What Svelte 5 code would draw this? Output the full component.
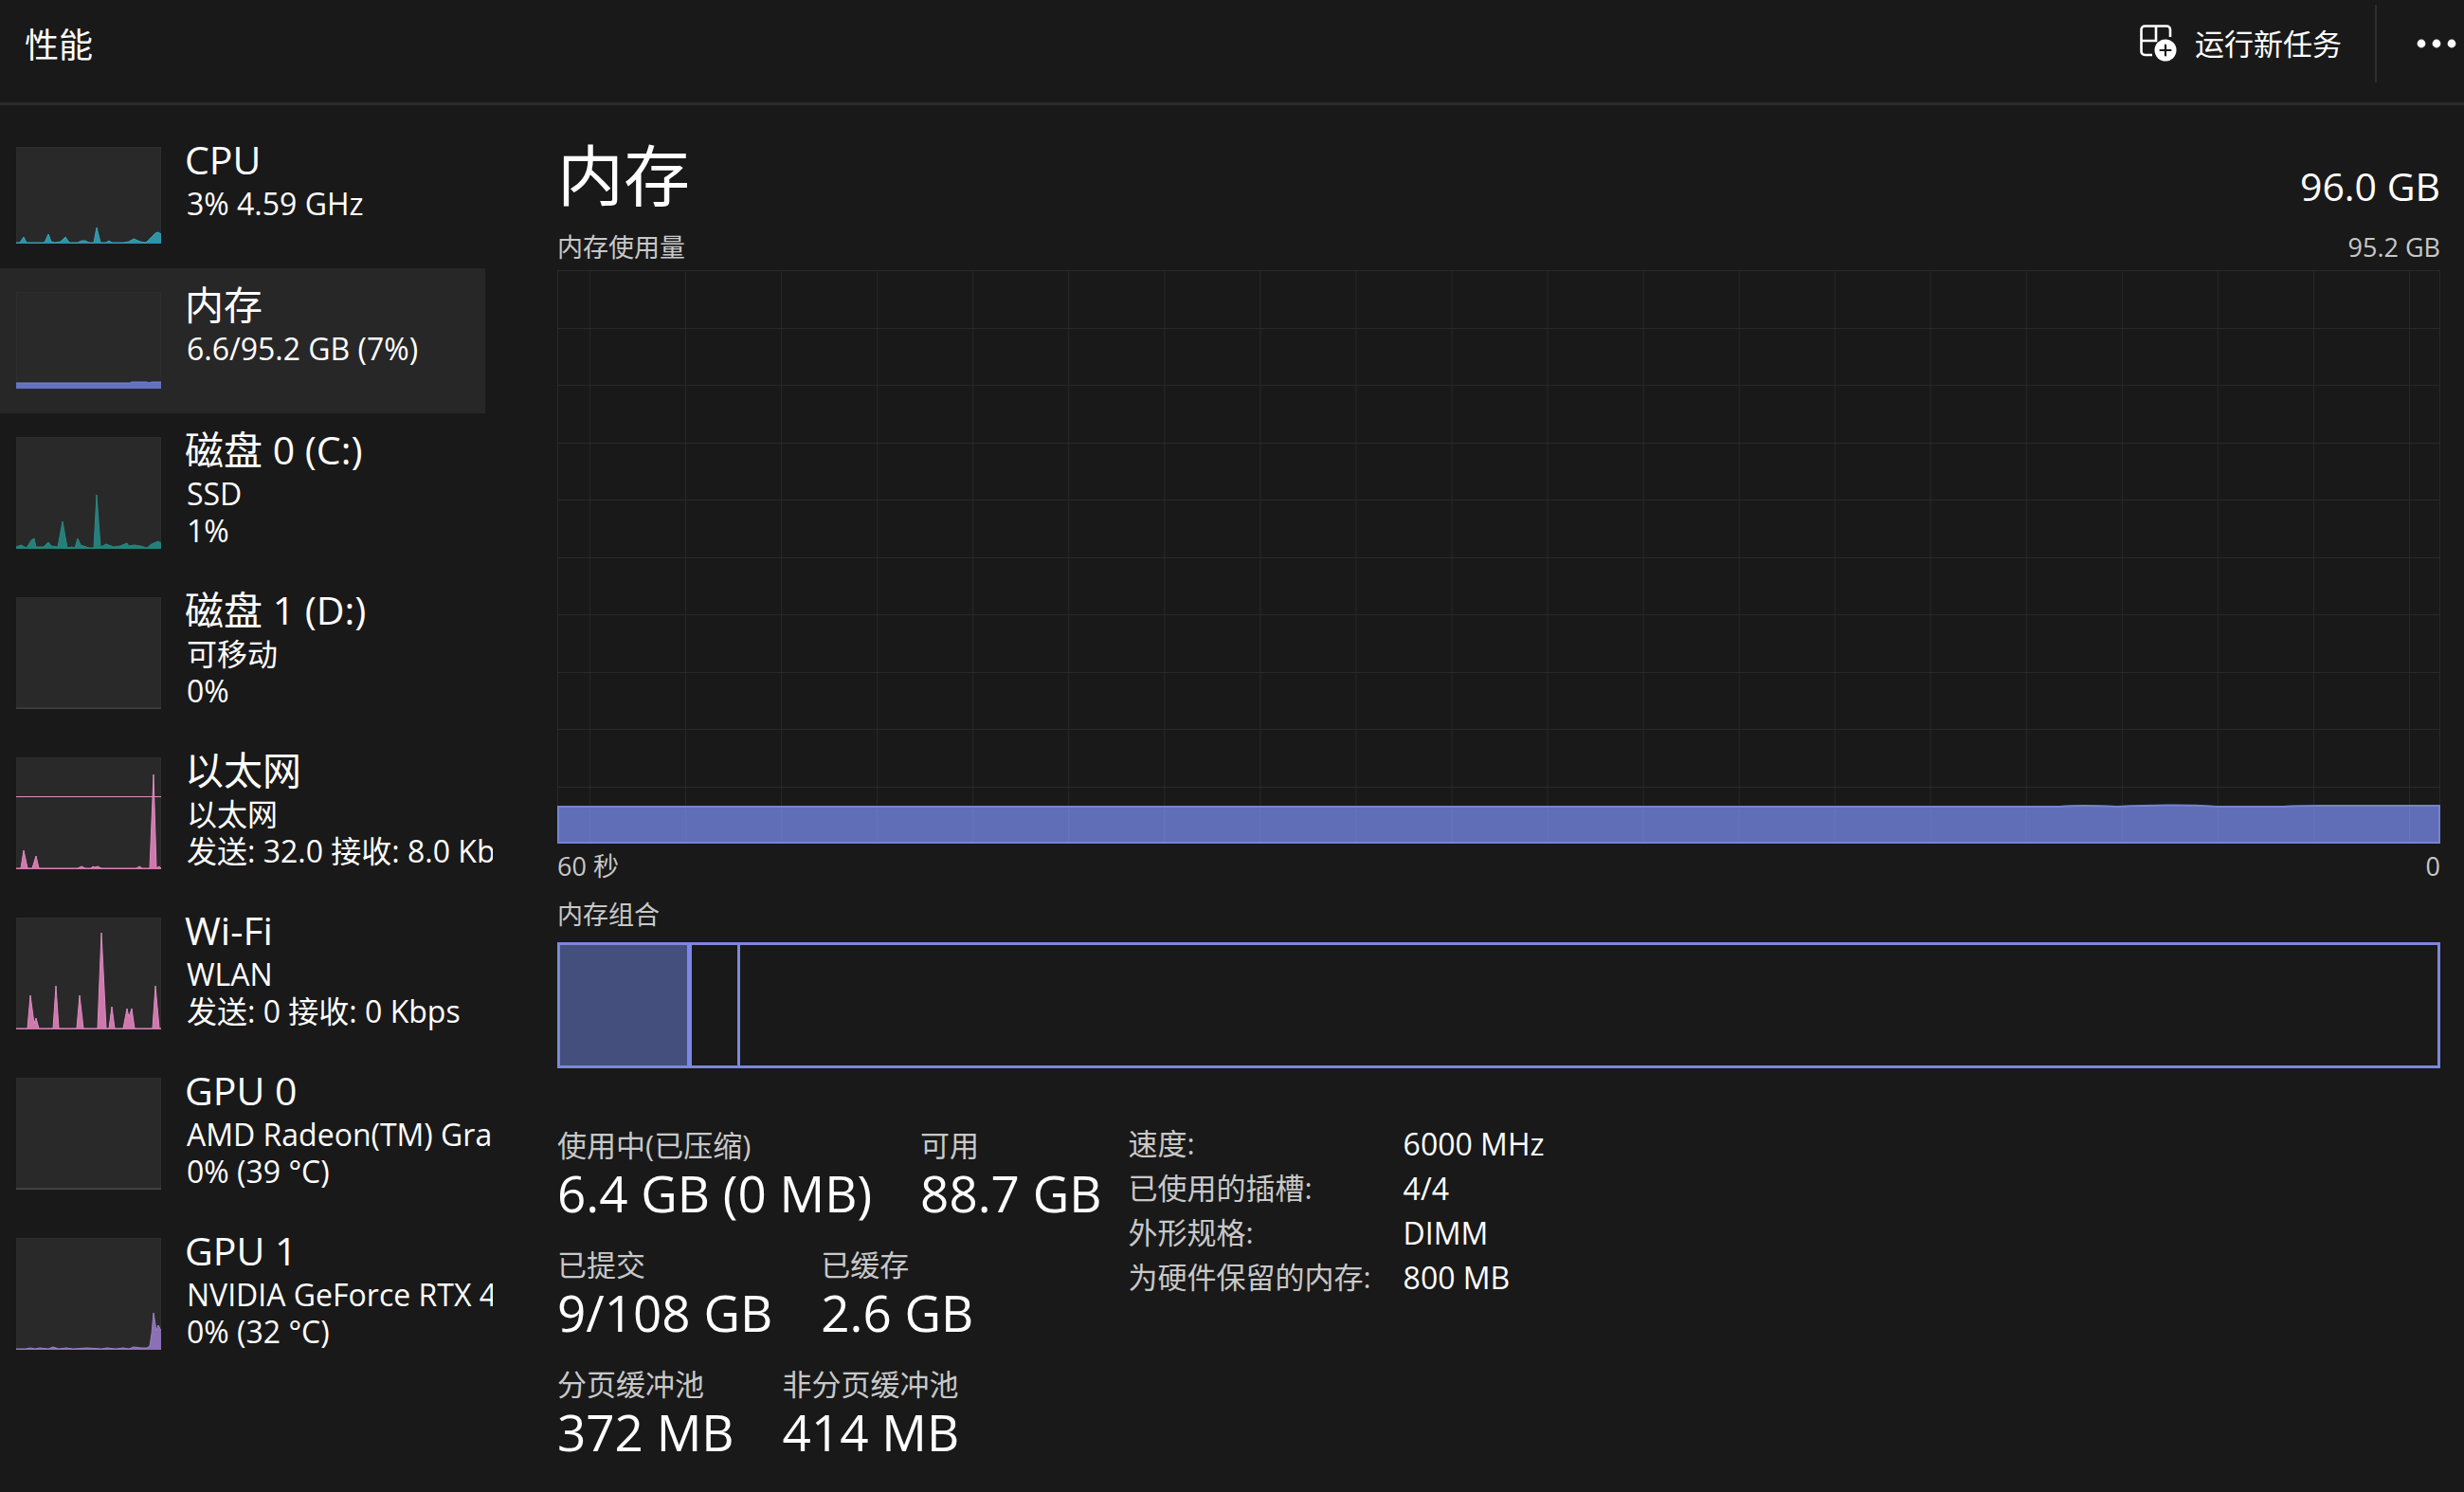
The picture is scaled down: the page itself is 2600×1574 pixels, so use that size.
<script>
  const items = [
    { name: 'CPU', lines: ['3% 4.59 GHz'], tone: 'cyan', h: 102,
      data: [[0,1],[4,1],[8,7],[11,1],[30,1],[34,10],[37,2],[41,1],[47,2],[52,7],[56,1],[65,1],[69,3],[73,3],[77,1],[82,1],[85,17],[89,1],[95,1],[98,3],[101,1],[113,1],[119,2],[124,5],[131,2],[137,1],[143,7],[147,11],[150,12],[153,10]] },
    { name: '内存', lines: ['6.6/95.2 GB (7%)'], tone: 'indigo', h: 102, selected: true,
      data: [[0,6],[120,6],[122,7],[138,7],[140,6],[143,7],[153,7]] },
    { name: '磁盘 0 (C:)', lines: ['SSD', '1%'], tone: 'teal', h: 118,
      data: [[0,2],[5,4],[11,1],[16,9],[19,11],[21,2],[29,2],[34,7],[37,3],[44,2],[49,29],[54,1],[59,2],[62,1],[65,11],[68,4],[77,1],[82,1],[85,57],[89,2],[95,5],[103,2],[110,3],[117,6],[119,3],[124,4],[131,3],[138,1],[143,5],[150,8],[153,6]] },
    { name: '磁盘 1 (D:)', lines: ['可移动', '0%'], tone: 'teal', h: 118, idle: true, data: [[0,1],[153,1]] },
    { name: '以太网', lines: ['以太网', '发送: 32.0 接收: 8.0 Kb'], tone: 'pink', h: 118, limit: 41,
      data: [[0,1],[5,1],[8,20],[12,1],[17,1],[21,14],[24,1],[65,1],[69,3],[73,1],[79,1],[81,3],[83,2],[86,3],[90,1],[127,1],[130,3],[133,1],[141,1],[145,100],[148,1],[151,3],[153,1]] },
    { name: 'Wi-Fi', lines: ['WLAN', '发送: 0 接收: 0 Kbps'], tone: 'pink', h: 118,
      data: [[0,1],[12,1],[15,36],[19,6],[21,12],[24,1],[39,1],[42,46],[45,1],[64,1],[67,36],[71,1],[86,1],[90,102],[95,1],[98,1],[101,24],[104,1],[113,1],[117,22],[119,13],[122,22],[125,1],[144,1],[147,46],[151,1],[153,1]] },
    { name: 'GPU 0', lines: ['AMD Radeon(TM) Gra', '0% (39 °C)'], tone: 'violet', h: 118, idle: true, data: [[0,1],[153,1]] },
    { name: 'GPU 1', lines: ['NVIDIA GeForce RTX 4', '0% (32 °C)'], tone: 'violet', h: 118,
      data: [[0,1],[10,1],[15,2],[20,1],[25,2],[34,1],[39,3],[45,1],[53,2],[60,1],[75,2],[90,1],[96,2],[105,1],[113,2],[119,1],[124,3],[132,2],[138,2],[141,4],[143,17],[145,39],[148,20],[150,26],[153,20]] }
  ];

  const groups = [
    [{ label: '使用中(已压缩)', value: '6.4 GB (0 MB)' }, { label: '可用', value: '88.7 GB' }],
    [{ label: '已提交', value: '9/108 GB' }, { label: '已缓存', value: '2.6 GB' }],
    [{ label: '分页缓冲池', value: '372 MB' }, { label: '非分页缓冲池', value: '414 MB' }]
  ];

  const details = [
    ['速度:', '6000 MHz'],
    ['已使用的插槽:', '4/4'],
    ['外形规格:', 'DIMM'],
    ['为硬件保留的内存:', '800 MB']
  ];

  const columns = Array.from({ length: 20 }, (_, i) => 34 + i * 101);
  const rows = Array.from({ length: 9 }, (_, i) => Math.round((i + 1) * 60.5));

  const line = (d, h) => d.map(([x, y]) => `${x},${h - y}`).join(' ');
</script>

<div class="app">
  <header>
    <h1>性能</h1>
    <div class="actions">
      <button class="run">
        <svg width="40" height="40" viewBox="0 0 40 40" aria-hidden="true">
          <path d="M32 13V5.200A3.700 3.700 0 0 0 28.300 1.500H5.200A3.700 3.700 0 0 0 1.500 5.200V28.300A3.700 3.700 0 0 0 5.200 32H13M17 1.500V17H1.500" fill="none" stroke="#fff" stroke-width="2.600" />
          <circle cx="27" cy="27" r="11.500" fill="#fff" />
          <path d="M27 21.500v11M21.500 27h11" stroke="#191919" stroke-width="2.200" stroke-linecap="round" />
        </svg>
        <span>运行新任务</span>
      </button>
      <span class="divider"></span>
      <button class="more" aria-label="更多">
        <svg width="42" height="10" viewBox="0 0 42 10" aria-hidden="true">
          <circle cx="5" cy="5" r="4.400" fill="#fff" />
          <circle cx="21" cy="5" r="4.400" fill="#fff" />
          <circle cx="37" cy="5" r="4.400" fill="#fff" />
        </svg>
      </button>
    </div>
  </header>

  <div class="body">
    <nav>
      {#each items as item}
        <button class="item" class:selected={item.selected} class:short={item.h === 102}>
          <svg class="thumb {item.tone}" class:idle={item.idle} width="153" height={item.h} viewBox="0 0 153 {item.h}" aria-hidden="true">
            <rect class="plate" x="0.5" y="0.5" width="152" height={item.h - 1} />
            <polygon class="area" points="0,{item.h} {line(item.data, item.h)} 153,{item.h}" />
            <polyline class="edge" points={line(item.data, item.h)} />
            {#if item.limit}
              <path class="edge" d="M0 {item.limit + 0.5}H153" />
            {/if}
          </svg>
          <span class="text">
            <span class="name">{item.name}</span>
            {#each item.lines as l}<span class="sub">{l}</span>{/each}
          </span>
        </button>
      {/each}
    </nav>

    <main>
      <div class="heading">
        <h2>内存</h2>
        <span class="total">96.0 GB</span>
      </div>
      <div class="caption top"><span>内存使用量</span><span>95.2 GB</span></div>
      <svg class="chart" viewBox="0 0 1986 605" preserveAspectRatio="none" role="img" aria-label="内存使用量">
        <g class="grid">
          {#each columns as x}<path d="M{x + 0.5} 0V605" />{/each}
          {#each rows as y}<path d="M0 {y + 0.5}H1986" />{/each}
          <rect x="0.5" y="0.5" width="1985" height="604" />
        </g>
        <path class="usage" d="M1 604V566H1585C1605 564 1625 565 1645 566C1690 564 1720 564 1750 566H1820C1835 565 1845 565 1860 565H1985V604Z" />
        <g class="over">
          {#each columns as x}<path d="M{x + 0.5} 567V603" />{/each}
        </g>
      </svg>
      <div class="caption axis"><span>60 秒</span><span>0</span></div>
      <div class="caption mix">内存组合</div>
      <div class="composition">
        <div class="used"></div>
        <div class="modified"></div>
      </div>

      <section class="stats">
        <div class="groups">
          {#each groups as g}
            <dl class="group">
              {#each g as s}
                <div><dt>{s.label}</dt><dd>{s.value}</dd></div>
              {/each}
            </dl>
          {/each}
        </div>
        <table class="details">
          <tbody>
            {#each details as [k, v]}
              <tr><th scope="row">{k}</th><td>{v}</td></tr>
            {/each}
          </tbody>
        </table>
      </section>
    </main>
  </div>
</div>

<style>
  :global(body) {
    background: #191919;
  }
  .app {
    min-height: 100vh;
    background: #191919;
    color: #fff;
    font-family: 'Open Sans', 'Noto Sans CJK SC', sans-serif;
    font-size: 31px;
  }
  h1, h2, dl, dd {
    margin: 0;
    font-weight: 400;
  }
  button {
    border: 0;
    padding: 0;
    background: none;
    color: inherit;
    font: inherit;
    text-align: left;
  }
  header {
    display: flex;
    justify-content: space-between;
    height: 108px;
    border-bottom: 3px solid #2b2b2b;
  }
  h1 {
    padding-left: 26px;
    font-size: 36px;
    line-height: 96px;
  }
  .actions {
    display: flex;
    align-items: center;
    height: 92px;
    padding-right: 8px;
  }
  .run {
    display: flex;
    align-items: center;
    gap: 18px;
    line-height: 48px;
  }
  .divider {
    width: 2px;
    height: 82px;
    margin: 0 42px 0 35px;
    background: #2e2e2e;
  }
  .more {
    display: flex;
  }
  .body {
    display: flex;
  }
  nav {
    flex: none;
    width: 520px;
    padding-top: 19px;
    overflow: hidden;
  }
  .item {
    display: flex;
    align-items: flex-start;
    width: 512px;
    height: 169px;
    padding-left: 17px;
  }
  .item.short {
    height: 153px;
  }
  .item.selected {
    background: #272727;
  }
  .thumb {
    flex: none;
    margin-top: 25px;
  }
  .plate {
    fill: #292929;
    stroke: #2d2d2d;
  }
  .area {
    fill: var(--fill);
  }
  .edge {
    fill: none;
    stroke: var(--line);
  }
  .cyan { --fill: #2f93a8; --line: #3ba5ba; }
  .indigo { --fill: #6371c4; --line: #7582d8; }
  .teal { --fill: #25807b; --line: #2a8782; }
  .pink { --fill: #cf78ae; --line: #dd8cc0; }
  .violet { --fill: #8a70b4; --line: #9a84c4; }
  .idle { --fill: #363c40; --line: #3c4245; }
  .violet.idle { --fill: #4a4a56; --line: #4a4a56; }
  .text {
    flex: 1;
    min-width: 0;
    padding: 13px 0 0 25px;
    white-space: nowrap;
  }
  .name {
    display: block;
    margin-bottom: 2px;
    font-size: 41px;
    line-height: 50px;
  }
  .sub {
    display: block;
    padding-left: 2px;
    font-size: 32px;
    line-height: 39px;
  }
  main {
    flex: 1;
    min-width: 0;
    padding: 33px 25px 0 68px;
  }
  .heading {
    display: flex;
    justify-content: space-between;
    align-items: baseline;
  }
  h2 {
    font-size: 70px;
    line-height: 82px;
  }
  .total {
    font-size: 41px;
    line-height: 50px;
  }
  .caption {
    display: flex;
    justify-content: space-between;
    color: #c8c8c8;
    font-size: 27px;
    line-height: 40px;
  }
  .top {
    margin: 15px 0 4px;
  }
  .axis {
    margin-top: 4px;
  }
  .mix {
    margin: 11px 0 9px;
  }
  .chart {
    display: block;
    width: 100%;
    height: 605px;
  }
  .grid {
    fill: none;
    stroke: #292929;
  }
  .usage {
    fill: #5f6eb7;
    stroke: #7684cf;
    stroke-width: 2;
  }
  .over {
    stroke: #6776bb;
  }
  .composition {
    display: flex;
    height: 127px;
    border: 3px solid #7b88dc;
  }
  .used {
    width: 7%;
    border-right: 5px solid #7b88ea;
    background: #454f7d;
    box-sizing: border-box;
  }
  .modified {
    width: 51px;
    border-right: 3px solid #7b88dc;
    box-sizing: border-box;
  }
  .stats {
    display: flex;
    align-items: flex-start;
    gap: 28px;
    margin-top: 56px;
  }
  .groups {
    display: grid;
    gap: 24px;
    padding-top: 5px;
  }
  .group {
    display: flex;
    gap: 51px;
  }
  dt {
    color: #c8c8c8;
    line-height: 40px;
  }
  dd {
    font-size: 53px;
    line-height: 62px;
  }
  .details {
    border-collapse: collapse;
    line-height: 47px;
  }
  th {
    padding: 0 34px 0 0;
    color: #c8c8c8;
    font-weight: 400;
    text-align: left;
  }
  td {
    padding: 0;
    font-size: 32px;
  }
</style>
